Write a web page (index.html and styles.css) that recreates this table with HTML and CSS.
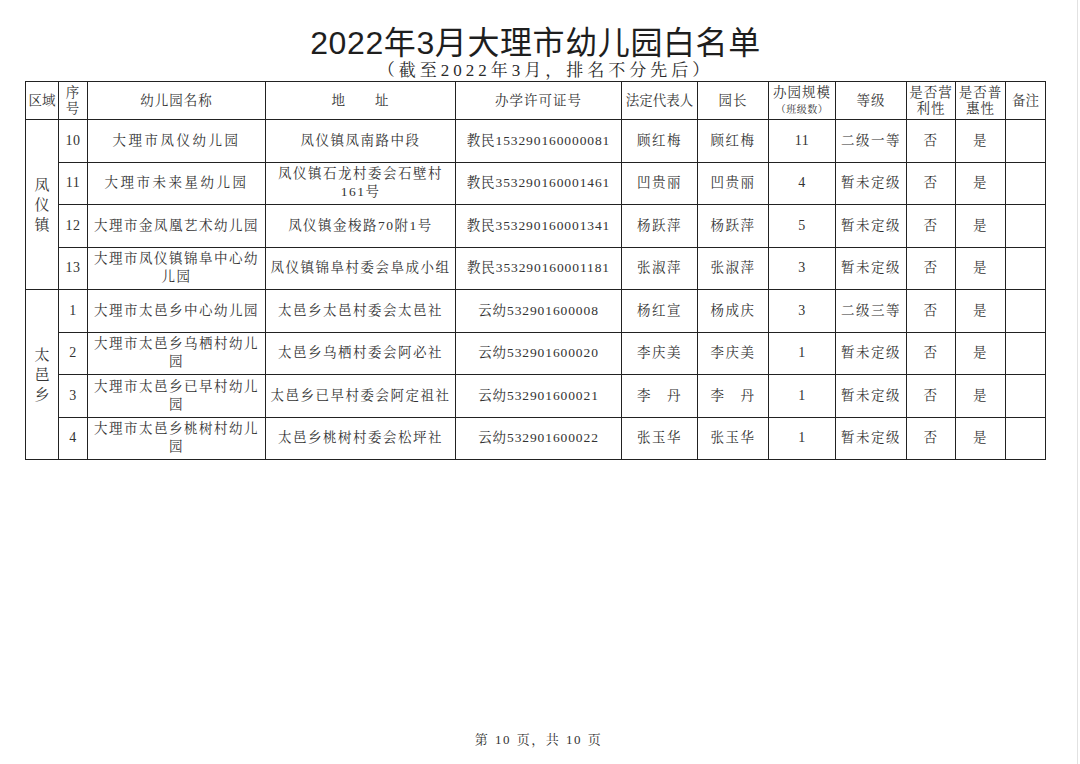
FILE: index.html
```html
<!DOCTYPE html>
<html lang="zh-CN">
<head>
<meta charset="utf-8">
<title>2022年3月大理市幼儿园白名单</title>
<link rel="stylesheet" href="styles.css">
</head>
<body>
<div class="page">
  <h1 class="title">2022年3月大理市幼儿园白名单</h1>
  <p class="subtitle">（截至2022年3月，排名不分先后）</p>
  <table class="list">
    <colgroup>
      <col class="c-area"><col class="c-no"><col class="c-name"><col class="c-addr"><col class="c-lic">
      <col class="c-rep"><col class="c-head"><col class="c-size"><col class="c-grade"><col class="c-profit">
      <col class="c-pub"><col class="c-note">
    </colgroup>
    <thead>
      <tr>
        <th class="tight">区域</th>
        <th class="two">序<br>号</th>
        <th>幼儿园名称</th>
        <th>地　　址</th>
        <th>办学许可证号</th>
        <th class="tight">法定代表人</th>
        <th>园长</th>
        <th class="two">办园规模<br><span class="small">（班级数）</span></th>
        <th>等级</th>
        <th class="two">是否营<br>利性</th>
        <th class="two">是否普<br>惠性</th>
        <th class="tight">备注</th>
      </tr>
    </thead>
    <tbody>
      <tr>
        <td class="area" rowspan="4">凤<br>仪<br>镇</td>
        <td class="num">10</td>
        <td class="wide">大理市凤仪幼儿园</td>
        <td>凤仪镇凤南路中段</td>
        <td class="lic">教民153290160000081</td>
        <td>顾红梅</td><td>顾红梅</td><td class="num">11</td><td>二级一等</td><td>否</td><td>是</td><td></td>
      </tr>
      <tr>
        <td class="num">11</td>
        <td class="wide">大理市未来星幼儿园</td>
        <td>凤仪镇石龙村委会石壁村<br>161号</td>
        <td class="lic">教民353290160001461</td>
        <td>凹贵丽</td><td>凹贵丽</td><td class="num">4</td><td>暂未定级</td><td>否</td><td>是</td><td></td>
      </tr>
      <tr>
        <td class="num">12</td>
        <td>大理市金凤凰艺术幼儿园</td>
        <td>凤仪镇金梭路70附1号</td>
        <td class="lic">教民353290160001341</td>
        <td>杨跃萍</td><td>杨跃萍</td><td class="num">5</td><td>暂未定级</td><td>否</td><td>是</td><td></td>
      </tr>
      <tr>
        <td class="num">13</td>
        <td>大理市凤仪镇锦阜中心幼<br>儿园</td>
        <td>凤仪镇锦阜村委会阜成小组</td>
        <td class="lic">教民353290160001181</td>
        <td>张淑萍</td><td>张淑萍</td><td class="num">3</td><td>暂未定级</td><td>否</td><td>是</td><td></td>
      </tr>
      <tr>
        <td class="area" rowspan="4">太<br>邑<br>乡</td>
        <td class="num">1</td>
        <td>大理市太邑乡中心幼儿园</td>
        <td>太邑乡太邑村委会太邑社</td>
        <td class="lic">云幼532901600008</td>
        <td>杨红宣</td><td>杨成庆</td><td class="num">3</td><td>二级三等</td><td>否</td><td>是</td><td></td>
      </tr>
      <tr>
        <td class="num">2</td>
        <td>大理市太邑乡乌栖村幼儿<br>园</td>
        <td>太邑乡乌栖村委会阿必社</td>
        <td class="lic">云幼532901600020</td>
        <td>李庆美</td><td>李庆美</td><td class="num">1</td><td>暂未定级</td><td>否</td><td>是</td><td></td>
      </tr>
      <tr>
        <td class="num">3</td>
        <td>大理市太邑乡已早村幼儿<br>园</td>
        <td>太邑乡已早村委会阿定祖社</td>
        <td class="lic">云幼532901600021</td>
        <td>李　丹</td><td>李　丹</td><td class="num">1</td><td>暂未定级</td><td>否</td><td>是</td><td></td>
      </tr>
      <tr>
        <td class="num">4</td>
        <td>大理市太邑乡桃树村幼儿<br>园</td>
        <td>太邑乡桃树村委会松坪社</td>
        <td class="lic">云幼532901600022</td>
        <td>张玉华</td><td>张玉华</td><td class="num">1</td><td>暂未定级</td><td>否</td><td>是</td><td></td>
      </tr>
    </tbody>
  </table>
  <div class="spacer"></div>
  <p class="footer">第 10 页，共 10 页</p>
</div>
</body>
</html>
```

FILE: styles.css
```css
html, body {
  margin: 0;
  padding: 0;
  background: #ffffff;
}

.page {
  width: 1077px;
  height: 764px;
  border-right: 1px solid #e2e2e2;
  display: flex;
  flex-direction: column;
  color: #333333;
  font-family: "Liberation Serif", "Noto Serif CJK SC", "Noto Sans CJK SC", serif;
}

.title {
  margin: 25px 0 0 0;
  padding-left: 0;
  text-align: center;
  font-family: "Liberation Sans", "Noto Sans CJK SC", sans-serif;
  font-weight: 400;
  font-size: 32px;
  line-height: 36px;
  letter-spacing: 0.6px;
  color: #1e1e1e;
  padding-right: 6px;
}

.subtitle {
  margin: -1px 0 0 0;
  padding-left: 14px;
  text-align: center;
  font-size: 17px;
  line-height: 21px;
  letter-spacing: 4px;
  color: #2a2a2a;
}

.list {
  margin: 0 0 0 25px;
  width: 1020px;
  table-layout: fixed;
  border-collapse: collapse;
  border: 1.5px solid #222222;
}

.c-area { width: 33px; }
.c-no { width: 29px; }
.c-name { width: 178px; }
.c-addr { width: 190px; }
.c-lic { width: 166px; }
.c-rep { width: 76px; }
.c-head { width: 71px; }
.c-size { width: 67px; }
.c-grade { width: 71px; }
.c-profit { width: 49px; }
.c-pub { width: 50px; }
.c-note { width: 40px; }

.list th,
.list td {
  border: 1.5px solid #222222;
  padding: 0;
  text-align: center;
  vertical-align: middle;
  font-weight: 400;
  font-size: 13.5px;
  line-height: 18px;
  letter-spacing: 1.5px;
  white-space: nowrap;
  overflow: hidden;
}

.list thead tr {
  height: 38px;
}

.list th {
  letter-spacing: 1px;
  font-size: 13.5px;
  line-height: 16px;
}

.list th.tight {
  letter-spacing: 0;
}

.list th.two {
  line-height: 16px;
}

.small {
  font-size: 10px;
  line-height: 12px;
  letter-spacing: 0.5px;
}

.list tbody tr {
  height: 42.5px;
}

.list td.wide {
  letter-spacing: 2.5px;
}

.list td.lic {
  letter-spacing: 0.9px;
}

.list td.num {
  font-size: 14px;
  letter-spacing: 0.5px;
}

.list td.area {
  font-size: 15px;
  line-height: 20px;
  letter-spacing: 0;
}

.spacer {
  flex: 1;
}

.footer {
  margin: 0 0 16px 0;
  text-align: center;
  font-size: 13px;
  line-height: 16px;
  letter-spacing: 1.5px;
  word-spacing: 1px;
  color: #333333;
}
```
